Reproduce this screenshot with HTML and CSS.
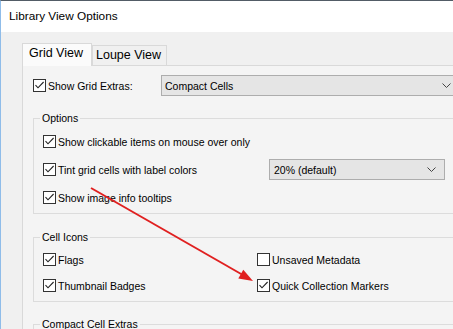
FILE: index.html
```html
<!DOCTYPE html>
<html>
<head>
<meta charset="utf-8">
<link rel="stylesheet" href="styles.css">
</head>
<body>
<div class="window">
  <div class="titlebar">Library View Options</div>
  <div class="dialog">
    <div class="tabs">
      <div class="tab active">Grid View</div>
      <div class="tab">Loupe View</div>
    </div>
    <div class="panel">
      <div class="top-row">
        <label class="check"><span class="box"><svg viewBox="0 0 11 11"><polyline points="1.5,5.2 4,7.8 9.6,2"/></svg></span>Show Grid Extras:</label>
        <div class="select select-wide"><span>Compact Cells</span><svg class="chev" viewBox="0 0 9 5"><polyline points="0.5,0.5 4.5,4.5 8.5,0.5"/></svg></div>
      </div>

      <fieldset class="group group-options">
        <legend>Options</legend>
        <div class="rows">
          <label class="check"><span class="box"><svg viewBox="0 0 11 11"><polyline points="1.5,5.2 4,7.8 9.6,2"/></svg></span>Show clickable items on mouse over only</label>
          <div class="split-row">
            <label class="check"><span class="box"><svg viewBox="0 0 11 11"><polyline points="1.5,5.2 4,7.8 9.6,2"/></svg></span>Tint grid cells with label colors</label>
            <div class="select select-small"><span>20% (default)</span><svg class="chev" viewBox="0 0 9 5"><polyline points="0.5,0.5 4.5,4.5 8.5,0.5"/></svg></div>
          </div>
          <label class="check"><span class="box"><svg viewBox="0 0 11 11"><polyline points="1.5,5.2 4,7.8 9.6,2"/></svg></span>Show image info tooltips</label>
        </div>
      </fieldset>

      <fieldset class="group group-icons">
        <legend>Cell Icons</legend>
        <div class="grid2">
          <label class="check"><span class="box"><svg viewBox="0 0 11 11"><polyline points="1.5,5.2 4,7.8 9.6,2"/></svg></span>Flags</label>
          <label class="check"><span class="box"></span>Unsaved Metadata</label>
          <label class="check"><span class="box"><svg viewBox="0 0 11 11"><polyline points="1.5,5.2 4,7.8 9.6,2"/></svg></span>Thumbnail Badges</label>
          <label class="check"><span class="box"><svg viewBox="0 0 11 11"><polyline points="1.5,5.2 4,7.8 9.6,2"/></svg></span>Quick Collection Markers</label>
        </div>
      </fieldset>

      <fieldset class="group group-extras">
        <legend>Compact Cell Extras</legend>
        <div class="spacer"></div>
      </fieldset>
    </div>
  </div>
  <svg class="arrow" viewBox="0 0 453 329" width="453" height="329">
    <line x1="91" y1="188" x2="242" y2="274.5"/>
    <polygon points="253,281 238.3,278.4 243.3,269.8"/>
  </svg>
</div>
</body>
</html>
```

FILE: styles.css
```css
html, body {
  margin: 0;
  padding: 0;
  background: #f0f0f0;
  overflow: hidden;
  width: 453px;
  height: 329px;
}

body {
  font-family: "Liberation Sans", Arial, sans-serif;
  font-size: 10.5px;
  color: #000;
}

.window {
  position: relative;
  height: 329px;
  border-left: 1px solid #8fbce9;
  border-top: 1px solid #525c66;
  box-sizing: border-box;
  overflow: hidden;
}

.titlebar {
  height: 31px;
  line-height: 31px;
  font-size: 11.8px;
  background: #fff;
  padding-left: 8px;
  white-space: nowrap;
}

.dialog {
  padding: 11px 0 0 21px;
}

.tabs {
  display: flex;
  align-items: flex-end;
  height: 22px;
  font-size: 12.5px;
}

.tab {
  border: 1px solid #d9d9d9;
  border-bottom: none;
  box-sizing: border-box;
  white-space: nowrap;
  line-height: 15px;
}

.tab.active {
  position: relative;
  z-index: 1;
  width: 70px;
  height: 23px;
  margin-bottom: -1px;
  padding: 2px 0 0 6px;
  background: #fbfbfb;
}

.tab:not(.active) {
  width: 75px;
  height: 20px;
  padding: 2px 0 0 3px;
  background: #f0f0f0;
}

.panel {
  width: 640px;
  border: 1px solid #d9d9d9;
  background: #f4f4f4;
  padding: 9px 0 0 10px;
  height: 400px;
}

.top-row {
  display: grid;
  grid-template-columns: 128px 298px;
  height: 21px;
  align-items: center;
}

.check {
  display: flex;
  align-items: center;
  height: 21px;
  white-space: nowrap;
}

.box {
  width: 13px;
  height: 13px;
  box-sizing: border-box;
  border: 1px solid #333;
  background: #fff;
  margin-right: 2px;
  flex: none;
  display: flex;
}

.box svg {
  width: 11px;
  height: 11px;
}

.box polyline {
  fill: none;
  stroke: #222;
  stroke-width: 1.1;
}

.select {
  height: 21px;
  box-sizing: border-box;
  border: 1px solid #adadad;
  background: #e5e5e5;
  display: flex;
  align-items: center;
  justify-content: space-between;
  white-space: nowrap;
}

.select-wide {
  padding: 0 7px 0 3px;
}

.select-small {
  width: 176px;
  padding: 0 8px 0 4px;
}

.chev {
  width: 9px;
  height: 5px;
}

.chev polyline {
  fill: none;
  stroke: #444;
  stroke-width: 1;
}

.group {
  border: 1px solid #dcdcdc;
  margin: 0;
  min-width: 0;
  width: 560px;
  padding: 0 0 5px 9px;
}

.group legend {
  padding: 0 2px;
  margin-left: -3px;
  line-height: 15px;
}

.group-options {
  margin-top: 15px;
  padding-top: 5px;
}

.rows {
  display: flex;
  flex-direction: column;
  gap: 7px;
}

.split-row {
  display: grid;
  grid-template-columns: 226px 176px;
  align-items: center;
}

.group-icons {
  margin-top: 16px;
  padding-top: 4px;
}

.grid2 {
  display: grid;
  grid-template-columns: 214px auto;
  row-gap: 5px;
}

.group-extras {
  margin-top: 15px;
}

.spacer {
  height: 40px;
}

.arrow {
  position: absolute;
  left: -1px;
  top: -1px;
  pointer-events: none;
}

.arrow line {
  stroke: #e02020;
  stroke-width: 2;
}

.arrow polygon {
  fill: #e02020;
}
```
